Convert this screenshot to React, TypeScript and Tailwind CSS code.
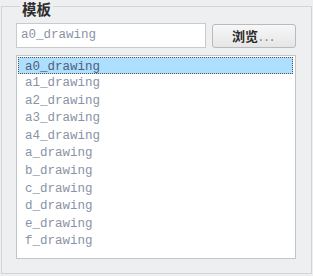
import React from "react";

const items = [
  "a0_drawing",
  "a1_drawing",
  "a2_drawing",
  "a3_drawing",
  "a4_drawing",
  "a_drawing",
  "b_drawing",
  "c_drawing",
  "d_drawing",
  "e_drawing",
  "f_drawing",
];

export default function App() {
  return (
    <div className="w-[313px] h-[276px] bg-[#eeeff1] pt-[6px] pl-[1px] pr-[1px] pb-[2px] relative">
      <div className="h-full border border-[#d3d4d6] pt-[16px] pl-[14px] pr-[15px] flex flex-col">
        <div className="flex gap-[6px] h-[25px]">
          <div
            className="w-[190px] h-[25px] bg-white border border-[#c9cacc] pl-[4px] flex items-center text-[12.5px] text-[#8a93a6]"
            style={{ fontFamily: '"Liberation Mono", monospace' }}
          >
            a0_drawing
          </div>
          <div
            className="w-[84px] h-[24px] mt-[1px] rounded-[3px] border border-[#b9babc] bg-gradient-to-b from-[#f7f7f7] to-[#e6e6e6] flex items-center justify-center text-[13px] font-bold text-[#2a2a2a]"
            style={{ fontFamily: '"Noto Sans CJK SC", sans-serif' }}
          >
            浏览<span className="font-normal text-[#6c7a8c] tracking-[2px] ml-[1px]">...</span>
          </div>
        </div>
        <div
          className="mt-[7px] w-[280px] h-[204px] bg-white border border-[#c4c5c7] pt-[1px] pl-[1px] pr-[2px]"
          style={{ fontFamily: '"Liberation Mono", monospace' }}
        >
          {items.map((t, i) => (
            <div
              key={t}
              className={
                i === 0
                  ? "h-[17px] leading-[16px] pt-[1px] pl-[6px] text-[12.5px] text-[#4f5f7a] bg-[#aedfff] border border-dotted border-[#555]"
                  : "h-[17.6px] leading-[17.6px] pt-[1px] pl-[7px] text-[12.5px] text-[#8a93a6]"
              }
            >
              {t}
            </div>
          ))}
        </div>
      </div>
      <div
        className="absolute left-[20px] top-0 px-[2px] bg-[#eeeff1] text-[14.5px] font-bold text-[#2e2e2e] leading-[17px]"
        style={{ fontFamily: '"Noto Sans CJK SC", sans-serif' }}
      >
        模板
      </div>
    </div>
  );
}
